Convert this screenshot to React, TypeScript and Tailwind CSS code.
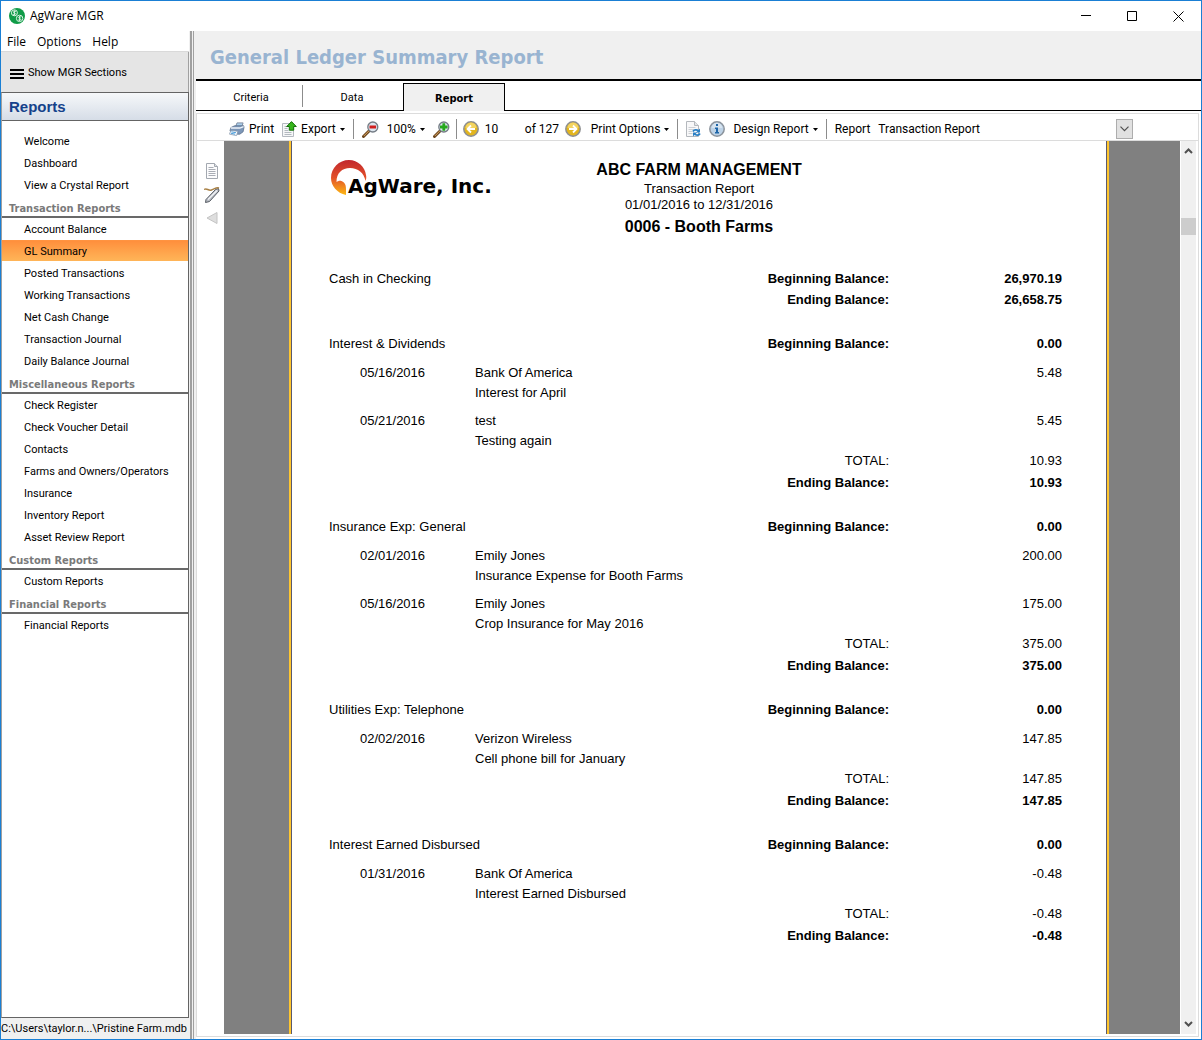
import { useState } from "react";
import type { ReactNode } from "react";

interface NavGroup {
    title?: string;
    items: string[];
}

interface Entry {
    date: string;
    name: string;
    memo: string;
    amount: string;
}

interface Account {
    name: string;
    beginning: string;
    entries: Entry[];
    total?: string;
    ending: string;
}

const navGroups: NavGroup[] = [
    { items: ["Welcome", "Dashboard", "View a Crystal Report"] },
    {
        title: "Transaction Reports",
        items: [
            "Account Balance",
            "GL Summary",
            "Posted Transactions",
            "Working Transactions",
            "Net Cash Change",
            "Transaction Journal",
            "Daily Balance Journal",
        ],
    },
    {
        title: "Miscellaneous Reports",
        items: [
            "Check Register",
            "Check Voucher Detail",
            "Contacts",
            "Farms and Owners/Operators",
            "Insurance",
            "Inventory Report",
            "Asset Review Report",
        ],
    },
    { title: "Custom Reports", items: ["Custom Reports"] },
    { title: "Financial Reports", items: ["Financial Reports"] },
];

const accounts: Account[] = [
    {
        name: "Cash in Checking",
        beginning: "26,970.19",
        entries: [],
        ending: "26,658.75",
    },
    {
        name: "Interest & Dividends",
        beginning: "0.00",
        entries: [
            { date: "05/16/2016", name: "Bank Of America", memo: "Interest for April", amount: "5.48" },
            { date: "05/21/2016", name: "test", memo: "Testing again", amount: "5.45" },
        ],
        total: "10.93",
        ending: "10.93",
    },
    {
        name: "Insurance Exp: General",
        beginning: "0.00",
        entries: [
            { date: "02/01/2016", name: "Emily Jones", memo: "Insurance Expense for Booth Farms", amount: "200.00" },
            { date: "05/16/2016", name: "Emily Jones", memo: "Crop Insurance for May 2016", amount: "175.00" },
        ],
        total: "375.00",
        ending: "375.00",
    },
    {
        name: "Utilities Exp: Telephone",
        beginning: "0.00",
        entries: [
            { date: "02/02/2016", name: "Verizon Wireless", memo: "Cell phone bill for January", amount: "147.85" },
        ],
        total: "147.85",
        ending: "147.85",
    },
    {
        name: "Interest Earned Disbursed",
        beginning: "0.00",
        entries: [
            { date: "01/31/2016", name: "Bank Of America", memo: "Interest Earned Disbursed", amount: "-0.48" },
        ],
        total: "-0.48",
        ending: "-0.48",
    },
];

export default function App() {
    return (
        <div className="flex h-screen min-h-[1040px] flex-col border border-[#1a7fd4] bg-white font-['Open_Sans',sans-serif] text-xs text-black">
            <TitleBar />
            <div className="flex min-h-0 flex-1">
                <Sidebar />
                <div className="flex w-[7px] shrink-0 justify-between border-l border-[#f0f0f0] bg-[#f0f0f0] pr-0.5">
                    <div className="w-0.5 bg-[#a0a0a0]" />
                    <div className="w-px bg-[#a0a0a0]" />
                </div>
                <main className="flex min-w-0 flex-1 flex-col">
                    <header className="flex h-[50px] shrink-0 items-center border-b-2 border-black bg-[#f0f0f0] px-3.5">
                        <h1 className="pt-1 font-['DejaVu_Sans_Condensed','DejaVu_Sans',sans-serif] text-xl font-bold text-[#99b4d1]">
                            General Ledger Summary Report
                        </h1>
                    </header>
                    <Tabs />
                    <div className="mt-0.5 mr-0.5 mb-0.5 flex min-h-0 flex-1 flex-col border border-[#dcdcdc]">
                        <Toolbar />
                        <Viewer />
                    </div>
                </main>
            </div>
        </div>
    );
}

function TitleBar() {
    return (
        <div className="flex h-[30px] shrink-0 items-center pl-2">
            <svg width="16" height="16" viewBox="0 0 16 16">
                <circle cx="8" cy="8" r="8" fill="#0f9b47" />
                <g fill="none" stroke="#d9f2e2" strokeWidth="1">
                    <circle cx="5.4" cy="4.8" r="3" />
                    <circle cx="10.6" cy="10.4" r="3.2" />
                    <path d="M6.8 3.6C5.6 2.8 4 3.6 4.6 4.5s2 .4 1.8 1.4-1.8.8-2.4.2M5.4 2.4v5M12 9.2c-1.2-.8-2.8 0-2.2.9s2.2.5 1.9 1.5-1.8.8-2.5.2M10.6 8v5" />
                </g>
            </svg>
            <span className="ml-[5px]">AgWare MGR</span>
            <div className="ml-auto flex">
                <button aria-label="Minimize" className="flex w-[46px] justify-center">
                    <svg width="11" height="11" stroke="black" fill="none"><path d="M0 4.5h10" /></svg>
                </button>
                <button aria-label="Maximize" className="flex w-[46px] justify-center">
                    <svg width="11" height="11" stroke="black" fill="none"><path d="M.5.5h9v9h-9z" /></svg>
                </button>
                <button aria-label="Close" className="flex w-[46px] justify-center">
                    <svg width="11" height="11" stroke="black" fill="none"><path d="M.5.5l10 10M10.500.5l-10 10" /></svg>
                </button>
            </div>
        </div>
    );
}

function Sidebar() {
    const [active, setActive] = useState("GL Summary");

    return (
        <aside className="flex w-[188px] shrink-0 flex-col font-['Roboto',sans-serif] text-[11px]">
            <nav className="flex h-[21px] shrink-0 items-center gap-[11px] border-b border-[#d9d9d9] px-1.5 pt-0.5 font-['Open_Sans',sans-serif] text-xs">
                <button>File</button>
                <button>Options</button>
                <button>Help</button>
            </nav>
            <button className="flex h-10 shrink-0 items-center gap-1 border-r border-[#a0a0a0] bg-[#e5e5e5] px-2 pt-[3px]">
                <svg width="15" height="10" fill="black">
                    <path d="M1 0h14v2H1zM1 4h14v2H1zM1 8h14v2H1z" />
                </svg>
                Show MGR Sections
            </button>
            <div className="flex min-h-0 flex-1 flex-col border border-[#646464] border-l-[#a0a0a0] bg-white">
                <h2 className="flex h-7 shrink-0 items-center border-b border-[#646464] bg-linear-to-b from-[#f6f8fa] to-[#d6dde7] px-[7px] font-['Liberation_Sans',Arial,sans-serif] text-[15px] font-bold text-[#15428b]">
                    Reports
                </h2>
                <div className="flex-1 pt-[9px]">
                    {navGroups.map((group, index) => (
                        <section key={index}>
                            {group.title && (
                                <h3 className="flex h-[22px] items-end border-b-2 border-[#696969] px-[7px] font-['DejaVu_Sans_Condensed','DejaVu_Sans',sans-serif] leading-[14px] font-bold text-[#7a7a7a]">
                                    {group.title}
                                </h3>
                            )}
                            {group.items.map((item) => (
                                <button
                                    key={item}
                                    onClick={() => setActive(item)}
                                    className={`flex h-[22px] w-full items-center border-y pt-0.5 pl-[22px] text-left ${
                                        item === active
                                            ? "border-t-[#ff9340] border-b-white bg-linear-to-b from-[#ff8f3c] to-[#ffb558] bg-clip-padding"
                                            : "border-transparent"
                                    }`}
                                >
                                    {item}
                                </button>
                            ))}
                        </section>
                    ))}
                </div>
            </div>
            <div className="flex h-[21px] shrink-0 items-center bg-[#f0f0f0] pt-0.5 whitespace-nowrap">
                C:\Users\taylor.n...\Pristine Farm.mdb
            </div>
        </aside>
    );
}

function Tabs() {
    return (
        <div role="tablist" className="flex h-[30px] shrink-0 items-stretch font-['Roboto',sans-serif] text-[11px]">
            <div className="w-1.5 border-b border-black" />
            <button role="tab" className="w-[100px] border-b border-black pt-1.5 pr-0.5">Criteria</button>
            <div className="flex items-center border-b border-black">
                <div className="h-[22px] w-px bg-[#8c8c8c]" />
            </div>
            <button role="tab" className="w-[100px] border-b border-black pt-1.5 pr-0.5">Data</button>
            <button
                role="tab"
                aria-selected="true"
                className="mt-0.5 w-[102px] border border-b-0 border-black bg-[#f0f0f0] pt-1 font-['DejaVu_Sans_Condensed','DejaVu_Sans',sans-serif] font-bold"
            >
                Report
            </button>
            <div className="flex-1 border-b border-black" />
        </div>
    );
}

function Divider() {
    return <div className="h-5 w-px shrink-0 bg-[#8c8c8c]" />;
}

function Caret() {
    return <svg width="5" height="3"><path d="M0 0h5L2.500 3z" fill="black" /></svg>;
}

function ToolButton({ icon, children, menu }: { icon?: ReactNode; children: ReactNode; menu?: boolean }) {
    return (
        <button className="flex shrink-0 items-center gap-1 whitespace-nowrap">
            {icon}
            {children}
            {menu && <Caret />}
        </button>
    );
}

function Toolbar() {
    const [page, setPage] = useState("10");

    return (
        <div className="flex h-[27px] shrink-0 items-center border-b border-[#dcdcdc] pt-1 pl-8 font-['Roboto',sans-serif] whitespace-nowrap">
            <div className="flex items-center gap-2">
                <ToolButton icon={<PrinterIcon />}>Print</ToolButton>
                <ToolButton icon={<ExportIcon />} menu>Export</ToolButton>
            </div>
            <div className="flex items-center gap-2 pl-2">
                <Divider />
                <button aria-label="Zoom out"><ZoomIcon sign="minus" /></button>
                <ToolButton menu>100%</ToolButton>
                <button aria-label="Zoom in"><ZoomIcon sign="plus" /></button>
            </div>
            <div className="flex items-center gap-1.5 pl-1.5">
                <Divider />
                <button aria-label="Previous page"><ArrowIcon dir="left" /></button>
                <input
                    aria-label="Page"
                    value={page}
                    onChange={(e) => setPage(e.target.value)}
                    className="w-[34px] bg-transparent outline-none"
                />
                <span className="w-[34px]">of 127</span>
                <button aria-label="Next page" className="pr-1"><ArrowIcon dir="right" /></button>
                <ToolButton menu>Print Options</ToolButton>
            </div>
            <div className="flex items-center gap-2 pl-2">
                <Divider />
                <button aria-label="Refresh"><RefreshIcon /></button>
                <button aria-label="Information"><InfoIcon /></button>
                <ToolButton menu>Design Report</ToolButton>
                <Divider />
                <label htmlFor="report">Report</label>
                <span id="report-name">Transaction Report</span>
            </div>
            <button
                id="report"
                aria-labelledby="report-name"
                className="mr-[65px] ml-auto flex h-5 w-[17px] items-center justify-center border border-[#adadad] bg-[#e1e1e1]"
            >
                <svg width="9" height="6" fill="none" stroke="#505050" strokeWidth="1.2"><path d="M.5.7l4 4 4-4" /></svg>
            </button>
        </div>
    );
}

function Viewer() {
    return (
        <div className="flex min-h-0 flex-1 pb-0.5">
            <div className="flex w-[27px] shrink-0 flex-col items-center gap-2 pt-[22px] pl-0.5">
                <button aria-label="Document map">
                    <svg width="14" height="16" viewBox="0 0 14 16">
                        <path d="M1.500.5h8l3 3v12h-11z" fill="#fcfcfd" stroke="#a3a8b0" />
                        <path d="M9.500.5v3h3" fill="#dde0e4" stroke="#a3a8b0" />
                        <path d="M3.500 4.500h5M3.500 6.500h7M3.500 8.500h7M3.500 10.500h7M3.500 12.500h7" stroke="#a9adb5" />
                    </svg>
                </button>
                <button aria-label="Annotate">
                    <svg width="16" height="16" viewBox="0 0 16 16" fill="none">
                        <path d="M14.500 1.500L15 4 5.500 14.500l-4 1L2 12.500 11.500 2.500z" fill="#b9bdc4" stroke="#555a62" />
                        <path d="M4 12.500L13 3.500" stroke="#f4f5f7" strokeWidth="1.300" />
                        <path d="M0 2.500C3 .5 4 4 7.500 3S12 0 15 1" stroke="#a98146" strokeWidth="1.500" />
                    </svg>
                </button>
                <button aria-label="Collapse">
                    <svg width="12" height="14"><path d="M11 1.500v11L1 7z" fill="#dedede" stroke="#c4c4c4" /></svg>
                </button>
            </div>
            <div className="flex min-w-0 flex-1 justify-center bg-[#808080] pr-1.5">
                <div className="flex w-[820px] border-x-2 border-[#ffc62f]">
                    <ReportPage />
                </div>
            </div>
            <div className="flex w-4 shrink-0 flex-col items-center border-l border-white bg-[#f0f0f0] py-[7px]">
                <svg width="9" height="6" fill="none" stroke="#505050" strokeWidth="2"><path d="M1 5l3.500-3.500L8 5" /></svg>
                <div className="mt-16 h-[17px] w-full bg-[#cdcdcd]" />
                <svg className="mt-auto" width="9" height="6" fill="none" stroke="#505050" strokeWidth="2"><path d="M1 1l3.500 3.500L8 1" /></svg>
            </div>
            <div className="w-0.5 shrink-0" />
        </div>
    );
}

function ReportPage() {
    return (
        <article className="flex-1 border-x border-[#5a5a6e] bg-white px-[37px] font-['Liberation_Sans',Arial,sans-serif] text-[13px]">
            <div className="grid grid-cols-[1fr_auto_1fr] pt-[19px]">
                <Logo />
                <div className="text-center">
                    <h2 className="h-[21px] text-base leading-5 font-bold">ABC FARM MANAGEMENT</h2>
                    <p className="leading-4">Transaction Report</p>
                    <p className="leading-4">01/01/2016 to 12/31/2016</p>
                    <p className="text-base leading-7 font-bold">0006 - Booth Farms</p>
                </div>
            </div>
            <div className="pt-[27px] pr-[7px]">
                <table className="w-full table-fixed border-collapse">
                    <colgroup>
                        <col className="w-[31px]" />
                        <col className="w-[115px]" />
                        <col />
                        <col className="w-[160px]" />
                        <col className="w-[173px]" />
                    </colgroup>
                    {accounts.map((account) => <AccountRows key={account.name} account={account} />)}
                </table>
            </div>
        </article>
    );
}

function AccountRows({ account }: { account: Account }) {
    return (
        <tbody>
            <tr className="h-[22px]">
                <th colSpan={3} className="text-left font-normal">{account.name}</th>
                <th className="text-right">Beginning Balance:</th>
                <td className="text-right font-bold">{account.beginning}</td>
            </tr>
            {account.entries.map((entry) => (
                <tr key={entry.date} className="align-top leading-5">
                    <td />
                    <td className="pt-2">{entry.date}</td>
                    <td colSpan={2} className="pt-2">
                        {entry.name}
                        <br />
                        {entry.memo}
                    </td>
                    <td className="pt-2 text-right">{entry.amount}</td>
                </tr>
            ))}
            {account.total && (
                <tr className="h-[22px] align-top leading-5">
                    <td colSpan={3} />
                    <td className="text-right">TOTAL:</td>
                    <td className="text-right">{account.total}</td>
                </tr>
            )}
            <tr className="h-[43px] align-top leading-5 font-bold">
                <td colSpan={3} />
                <td className="text-right">Ending Balance:</td>
                <td className="text-right">{account.ending}</td>
            </tr>
        </tbody>
    );
}

function Logo() {
    return (
        <div className="flex items-start pl-0.5">
            <svg width="36" height="36" viewBox="0 0 36 36" className="shrink-0">
                <defs>
                    <linearGradient id="flame" x1="0" y1="0" x2="0" y2="1">
                        <stop offset="0" stopColor="#c1272d" />
                        <stop offset=".5" stopColor="#e2502a" />
                        <stop offset="1" stopColor="#fdb813" />
                    </linearGradient>
                </defs>
                <path
                    d="M15 35C6 33 0 26 0 18 0 8 8 0 18 0c9 0 16 7 17 15 .5 2 .3 4-.4 6C33 13 27 8 19 8 11 8 5.500 13 5.500 22c1.500-1 3-1.800 5-1 4 1.500 4.500 5 4.500 8z"
                    fill="url(#flame)"
                />
            </svg>
            <span className="-ml-[19px] pt-3.5 font-['DejaVu_Sans',Verdana,sans-serif] text-xl leading-6 font-bold whitespace-nowrap">
                AgWare, Inc.
            </span>
        </div>
    );
}

function PrinterIcon() {
    return (
        <svg width="16" height="16" viewBox="0 0 17 16">
            <path d="M8.500 1.500h6.500l-2 5.500H6.500z" fill="#a9cdea" stroke="#7f8ca0" />
            <path d="M2 6.500l4-2h9.500l.5 1.500-1 5-3.500 2.500H9L1 10z" fill="#7d97b8" stroke="#5a6e89" strokeWidth=".8" />
            <path d="M2 7h9.500l4-1.500" stroke="#eef4fa" strokeWidth="1.500" fill="none" />
            <path d="M2 9.500l7.500 1-1.500 4.500-7.500-1.500z" fill="#fff" stroke="#8394a9" strokeWidth=".8" />
            <path d="M2.500 11l5 1M2 12.500l4.500 1" stroke="#3d95d8" />
        </svg>
    );
}

function ExportIcon() {
    return (
        <svg width="15" height="16" viewBox="0 0 15 16">
            <path d="M.5 2.500h8l3 3v10H.5z" fill="#f6f7f8" stroke="#b4b9c0" />
            <path d="M2.500 5.500h3M2.500 7.500h3M2.500 9.500h4M2.500 11.500h7M2.500 13.500h7" stroke="#b4b9c0" />
            <path d="M9.500.6l4.800 4.900h-2.600v3.700H7.300V5.500H4.700z" fill="#37b51c" stroke="#16700c" />
        </svg>
    );
}

function ZoomIcon({ sign }: { sign: "plus" | "minus" }) {
    return (
        <svg width="17" height="17" viewBox="0 0 17 17">
            <path d="M1.500 15.500l6-6" stroke="#6d4720" strokeWidth="3" strokeLinecap="round" />
            <path d="M1.800 15l5-5" stroke="#d9a55f" strokeWidth="1" />
            <circle cx="10.800" cy="6" r="5" fill="#dce5ee" stroke="#737b84" strokeWidth="1.300" />
            {sign === "minus"
                ? <path d="M7.500 6h6.600" stroke="#d01f1f" strokeWidth="3" />
                : <path d="M7 6h7.600M10.800 2.200v7.600" stroke="#25a81c" strokeWidth="2.800" />}
        </svg>
    );
}

function ArrowIcon({ dir }: { dir: "left" | "right" }) {
    return (
        <svg width="16" height="16" viewBox="0 0 16 16">
            <circle cx="8" cy="8" r="7.200" fill="#e2b51f" stroke="#8d8f92" strokeWidth="1.500" />
            <path d="M2.500 7a5.500 5.500 0 0 1 11 0" fill="#f3d461" />
            <path
                d={dir === "left" ? "M12 8H4.500M8 4.500L4.500 8 8 11.500" : "M4 8h7.500M8 4.500L11.500 8 8 11.500"}
                fill="none"
                stroke="#fff"
                strokeWidth="1.800"
            />
        </svg>
    );
}

function RefreshIcon() {
    return (
        <svg width="15" height="16" viewBox="0 0 15 16">
            <path d="M.5.5h8l4 4v11H.5z" fill="#f8f8f9" stroke="#b4b8bd" />
            <path d="M8.500.5v4h4" fill="#e3e5e8" stroke="#b4b8bd" />
            <path d="M2.500 6.500h7M2.500 8.500h5M2.500 10.500h4M2.500 12.500h4" stroke="#cdd0d4" />
            <path d="M7 10.500c1-2 4-2 5.500-.5M14 12.500c-1 2-4 2-5.500.5" fill="none" stroke="#2a7fc4" strokeWidth="1.700" />
            <path d="M14 7.500v4h-4zM7 15.500v-4h4z" fill="#2a7fc4" />
        </svg>
    );
}

function InfoIcon() {
    return (
        <svg width="16" height="16" viewBox="0 0 16 16">
            <circle cx="8" cy="8" r="7.200" fill="#bdd2e6" stroke="#8b939c" strokeWidth="1.500" />
            <path d="M2.800 7a5.200 5.200 0 0 1 10.400 0" fill="#d7e4f0" />
            <path d="M7 3h2v2H7zM6 6.500h3v4.500h1v1.500H6V11h1V8H6z" fill="#1f66a8" />
        </svg>
    );
}
